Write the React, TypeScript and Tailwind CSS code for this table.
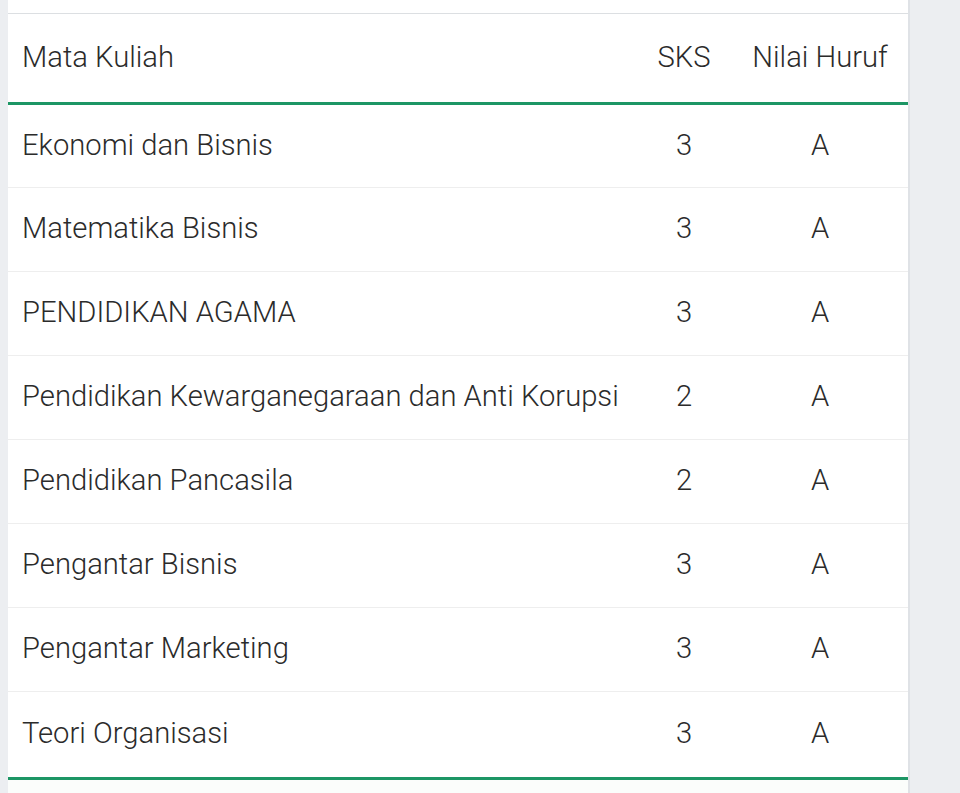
import React from 'react';

const rows = [
  { name: 'Ekonomi dan Bisnis', sks: 3, nilai: 'A' },
  { name: 'Matematika Bisnis', sks: 3, nilai: 'A' },
  { name: 'PENDIDIKAN AGAMA', sks: 3, nilai: 'A' },
  { name: 'Pendidikan Kewarganegaraan dan Anti Korupsi', sks: 2, nilai: 'A' },
  { name: 'Pendidikan Pancasila', sks: 2, nilai: 'A' },
  { name: 'Pengantar Bisnis', sks: 3, nilai: 'A' },
  { name: 'Pengantar Marketing', sks: 3, nilai: 'A' },
  { name: 'Teori Organisasi', sks: 3, nilai: 'A' },
];

export default function App() {
  return (
    <div className="flex min-h-[793px] bg-[#eceef1] font-['Roboto',sans-serif] text-[29.2px] font-light text-[#2b2b2b]">
      <div className="ml-2 w-[902px] bg-white border-r-2 border-[#dfe2e6]">
        <div className="h-[14px] border-b border-[#dcdfe2]" />
        <table className="w-full border-collapse">
          <thead>
            <tr className="h-[89px] border-b-[3px] border-[#1d9665]">
              <th className="w-[628px] pl-[14px] text-left font-light">Mata Kuliah</th>
              <th className="w-[96px] text-center font-light">SKS</th>
              <th className="text-center font-light">Nilai Huruf</th>
            </tr>
          </thead>
          <tbody>
            {rows.map((r, i) => (
              <tr
                key={r.name}
                className={
                  i === rows.length - 1
                    ? 'h-[87px] border-b-[3px] border-[#1d9665]'
                    : 'h-[84px] border-b border-[#eeeeee]'
                }
              >
                <td className="pl-[14px]">{r.name}</td>
                <td className="text-center">{r.sks}</td>
                <td className="text-center">{r.nilai}</td>
              </tr>
            ))}
          </tbody>
        </table>
        <div className="h-[13px] bg-[#fbfdfb]" />
      </div>
    </div>
  );
}
